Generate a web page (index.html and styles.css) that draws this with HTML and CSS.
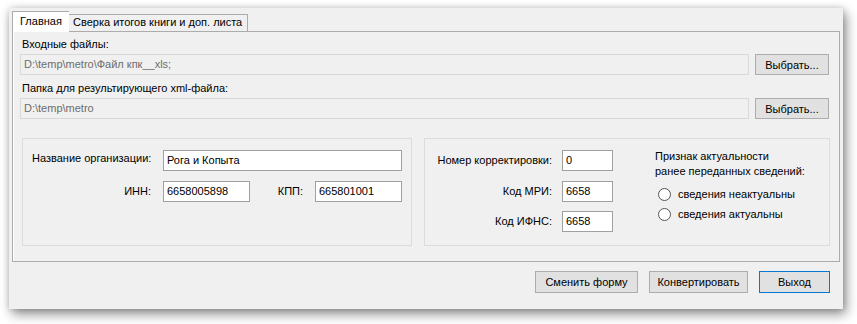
FILE: index.html
```html
<!DOCTYPE html>
<html lang="ru">
<head>
<meta charset="utf-8">
<link rel="stylesheet" href="styles.css">
</head>
<body>
<div class="window">
  <div class="tabs">
    <div class="tab active">Главная</div>
    <div class="tab">Сверка итогов книги и доп. листа</div>
  </div>
  <div class="panel">
    <div class="label">Входные файлы:</div>
    <div class="filerow">
      <div class="field disabled">D:\temp\metro\Файл кпк__xls;</div>
      <button class="btn pick">Выбрать...</button>
    </div>
    <div class="label second">Папка для результирующего xml-файла:</div>
    <div class="filerow">
      <div class="field disabled">D:\temp\metro</div>
      <button class="btn pick">Выбрать...</button>
    </div>
    <div class="groups">
      <div class="group org">
        <div class="lbl name">Название организации:</div>
        <div class="field wide">Рога и Копыта</div>
        <div class="lbl rt">ИНН:</div>
        <div class="field">6658005898</div>
        <div class="lbl rt">КПП:</div>
        <div class="field">665801001</div>
      </div>
      <div class="group corr">
        <div class="codes">
          <div class="lbl rt">Номер корректировки:</div>
          <div class="field small">0</div>
          <div class="lbl rt">Код МРИ:</div>
          <div class="field small">6658</div>
          <div class="lbl rt">Код ИФНС:</div>
          <div class="field small">6658</div>
        </div>
        <div class="flag">
          <div class="flag-title">Признак актуальности<br>ранее переданных сведений:</div>
          <div class="radio first"><span class="circle"></span>сведения неактуальны</div>
          <div class="radio"><span class="circle"></span>сведения актуальны</div>
        </div>
      </div>
    </div>
  </div>
  <div class="footer">
    <button class="btn change">Сменить форму</button>
    <button class="btn convert">Конвертировать</button>
    <button class="btn exit">Выход</button>
  </div>
</div>
</body>
</html>
```

FILE: styles.css
```css
html, body {
  margin: 0;
  padding: 0;
  background: #ffffff;
}
body {
  font-family: "Liberation Sans", Arial, sans-serif;
  font-size: 11px;
  color: #000;
  width: 857px;
  height: 324px;
  overflow: hidden;
}
.window {
  margin: 8px 0 0 9px;
  width: 834px;
  height: 301px;
  box-sizing: border-box;
  background: #f0f0f0;
  padding: 3px 3px 0 3px;
  box-shadow: 3px 5px 11px rgba(0,0,0,0.45), 0 0 6px rgba(0,0,0,0.15);
  display: flex;
  flex-direction: column;
}
.tabs {
  display: flex;
  height: 20px;
  align-items: flex-start;
}
.tab {
  box-sizing: border-box;
  margin-top: 3px;
  height: 17px;
  width: 179px;
  border: 1px solid #acacac;
  border-bottom: none;
  border-left: none;
  background: #f0f0f0;
  line-height: 15px;
  padding-left: 4px;
  white-space: nowrap;
}
.tab.active {
  margin-top: 0;
  height: 21px;
  width: 57px;
  border-left: 1px solid #acacac;
  border-right: none;
  background: #ffffff;
  position: relative;
  z-index: 1;
  margin-bottom: -1px;
  line-height: 19px;
  padding-left: 7px;
}
.panel {
  box-sizing: border-box;
  height: 231px;
  border: 1px solid #acacac;
  box-shadow: inset 1px 0 0 #ffffff;
  padding: 4px 10px 0 7px;
}
.label {
  height: 16px;
  line-height: 16px;
  padding-left: 2px;
  margin-bottom: 2px;
}
.label.second {
  margin-top: 5px;
}
.filerow {
  display: flex;
  gap: 6px;
  height: 21px;
}
.field {
  box-sizing: border-box;
  height: 21px;
  border: 1px solid #a0a0a0;
  background: #ffffff;
  padding-left: 3px;
  line-height: 19px;
  white-space: nowrap;
  overflow: hidden;
}
.field.disabled {
  flex: 1;
  background: #f0f0f0;
  border-color: #d9d9d9;
  color: #6d6d6d;
}
.btn {
  box-sizing: border-box;
  font: inherit;
  color: #000;
  background: #e1e1e1;
  border: 1px solid #adadad;
  height: 21px;
  padding: 0;
  margin: 0;
}
.btn.pick {
  width: 74px;
}
.groups {
  display: flex;
  gap: 12px;
  margin: 19px -1px 0 2px;
  height: 108px;
}
.group {
  box-sizing: border-box;
  border: 1px solid #dcdcdc;
  height: 108px;
}
.group.org {
  width: 390px;
  padding: 11px 0 0 9px;
  display: grid;
  grid-template-columns: 131px 87px 65px 87px;
  grid-template-rows: 21px 21px;
  row-gap: 10px;
  align-content: start;
}
.lbl {
  line-height: 21px;
  white-space: nowrap;
}
.lbl.name {
  line-height: 16px;
}
.lbl.rt {
  text-align: right;
  padding-right: 12px;
}
.field.wide {
  grid-column: 2 / 5;
}
.group.corr {
  flex: 1;
  display: flex;
  padding: 11px 0 0 10px;
}
.codes {
  display: grid;
  grid-template-columns: 127px 51px;
  grid-template-rows: 21px 21px 21px;
  row-gap: 9.5px;
  align-content: start;
}
.codes .lbl.rt {
  padding-right: 10px;
}
.flag {
  margin-left: 42px;
}
.flag-title {
  line-height: 15px;
  margin-top: -1px;
}
.radio {
  display: flex;
  align-items: center;
  height: 20px;
  padding-left: 3px;
  gap: 7px;
}
.radio.first {
  margin-top: 5px;
}
.circle {
  box-sizing: border-box;
  width: 13px;
  height: 13px;
  border: 1px solid #555555;
  border-radius: 50%;
  background: #ffffff;
}
.footer {
  display: flex;
  justify-content: flex-end;
  gap: 11px;
  margin-top: 9px;
  padding-right: 10px;
}
.footer .btn {
  height: 22px;
}
.btn.change { width: 103px; }
.btn.convert { width: 99px; }
.btn.exit { width: 71px; border-color: #0078d7; }
```
